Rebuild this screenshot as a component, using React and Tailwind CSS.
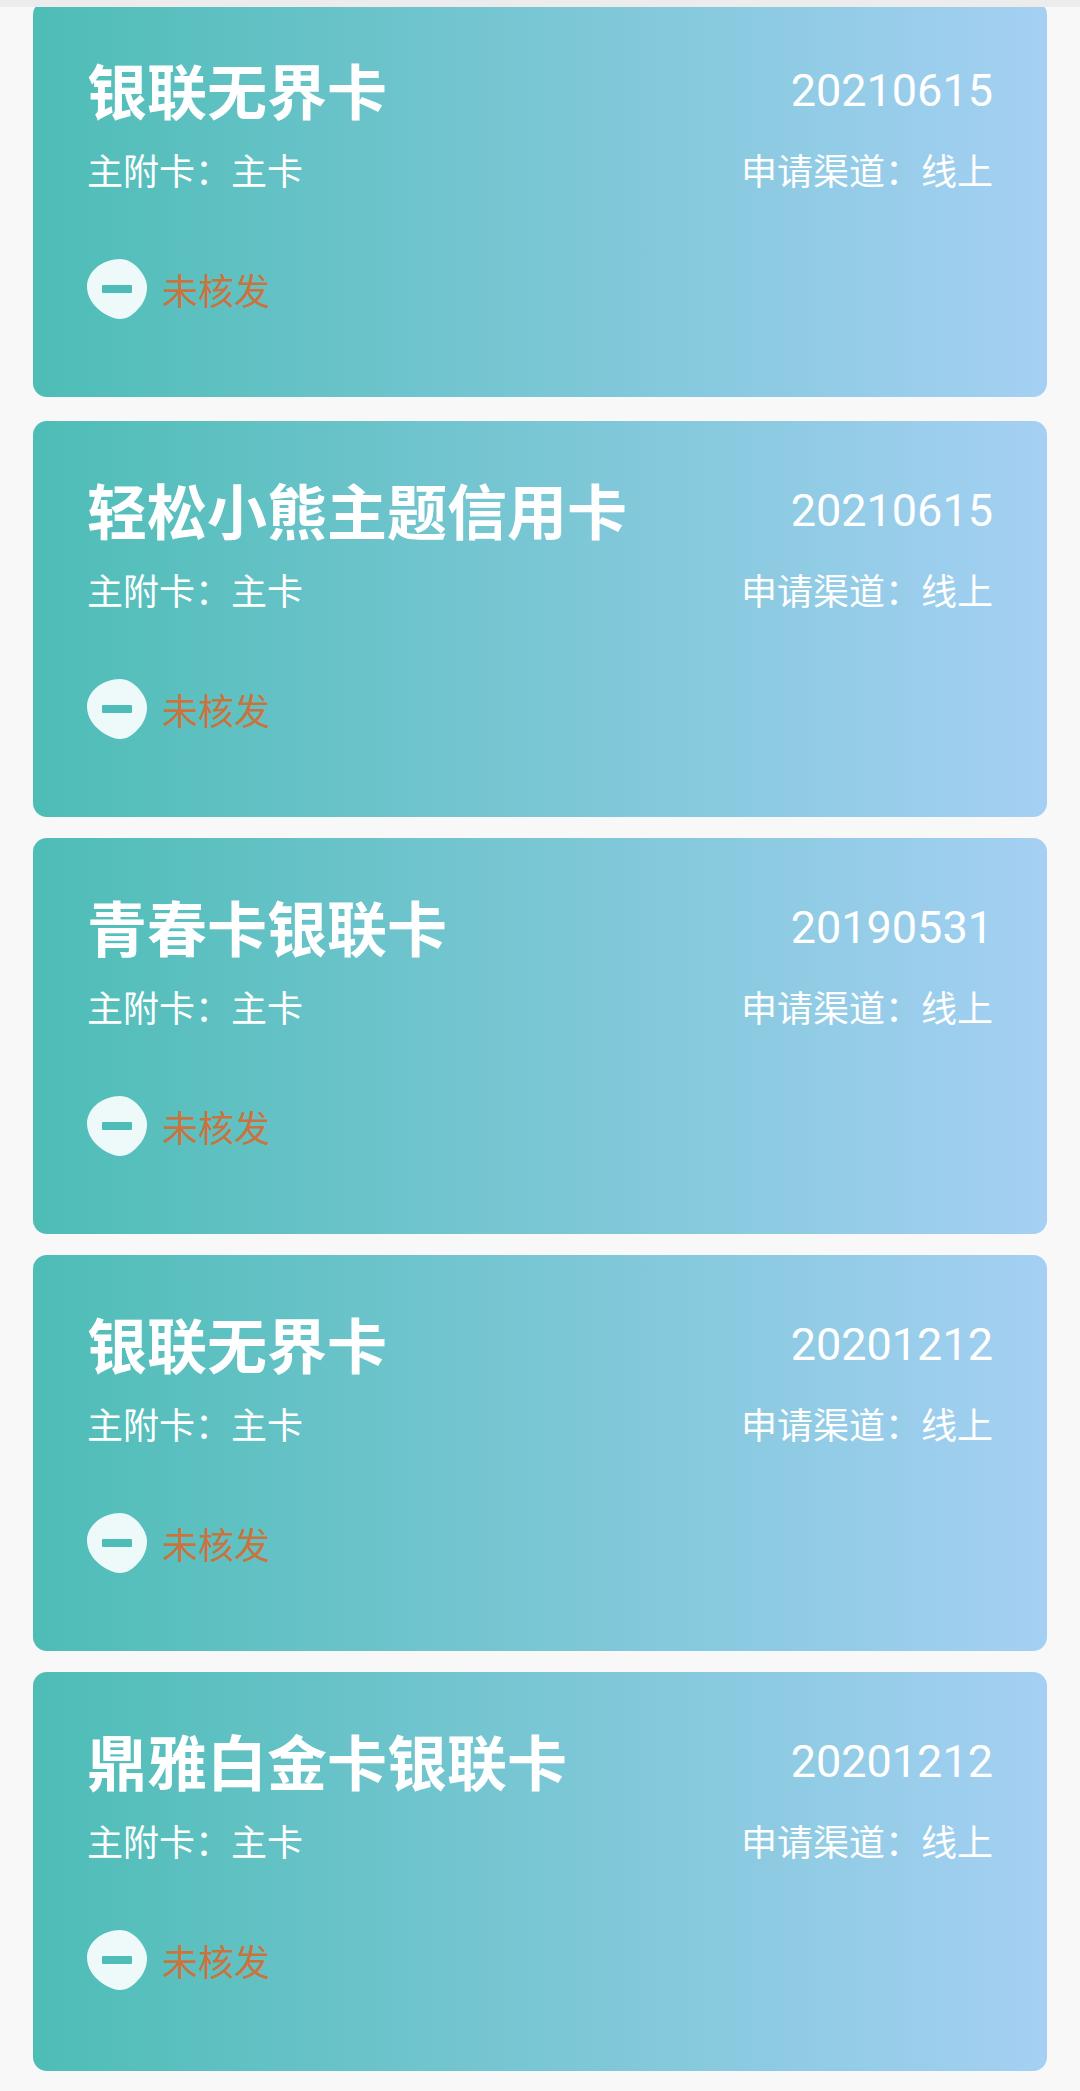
import { clsx } from 'clsx';

// 1. DATA
const applications = [
    { id: 1, name: '银联无界卡', date: '20210615', type: '主卡', channel: '线上', status: '未核发' },
    { id: 2, name: '轻松小熊主题信用卡', date: '20210615', type: '主卡', channel: '线上', status: '未核发' },
    { id: 3, name: '青春卡银联卡', date: '20190531', type: '主卡', channel: '线上', status: '未核发' },
    { id: 4, name: '银联无界卡', date: '20201212', type: '主卡', channel: '线上', status: '未核发' },
    { id: 5, name: '鼎雅白金卡银联卡', date: '20201212', type: '主卡', channel: '线上', status: '未核发' },
];

// 2. ELEMENTS
function MinusBadge() {
    return (
        <svg viewBox="0 0 60 60" className="size-[60px] shrink-0" aria-hidden="true">
            <path
                d="M33 0C40 0 47 4 52 10C57 16 60 22 60 28C60 36 57 44 51 50C46 56 40 60 33 60C25 60 15 54 9 48C3 42 0 35 0 27C0 20 4 13 10 8C16 3 25 0 33 0Z"
                fill="#eef9fa"
            />
            <rect x="15" y="26" width="30" height="8" rx="1" fill="#4fbdb7" />
        </svg>
    );
}

function ApplicationCard({ item, first, last }) {
    return (
        <li
            className={clsx(
                'rounded-[14px] bg-linear-to-r/srgb from-[#4ebdb6] to-[#a5d0f3] px-[54px] pt-[50px]',
                first && 'mb-[3px]',
                last ? 'pb-[81px]' : 'pb-[78px]'
            )}
        >
            <div className="flex items-start justify-between">
                <h2 className="text-[60px] leading-[76px] font-bold">{item.name}</h2>
                <time className="font-[Roboto] text-[45px] leading-[80px]">{item.date}</time>
            </div>
            <div className="mt-[14px] flex justify-between text-[36px] leading-[48px]">
                <p>主附卡：{item.type}</p>
                <p>申请渠道：{item.channel}</p>
            </div>
            <div className="mt-[66px] flex items-center gap-[15px]">
                <MinusBadge />
                <span className="text-[36px] leading-[60px] text-[#c9743f]">{item.status}</span>
            </div>
        </li>
    );
}

// 3. RENDERING
export default function App() {
    return (
        <div className="min-h-screen bg-[#f8f8f8] font-['Noto_Sans_CJK_SC',sans-serif] text-white">
            <header className="sticky top-0 z-10 h-[7px] bg-[#ececec]" />
            <main className="-mt-[6px] px-[33px] pb-5">
                <ul className="flex flex-col gap-[21px]">
                    {applications.map((item, index) => (
                        <ApplicationCard
                            key={item.id}
                            item={item}
                            first={index === 0}
                            last={index === applications.length - 1}
                        />
                    ))}
                </ul>
            </main>
        </div>
    );
}
